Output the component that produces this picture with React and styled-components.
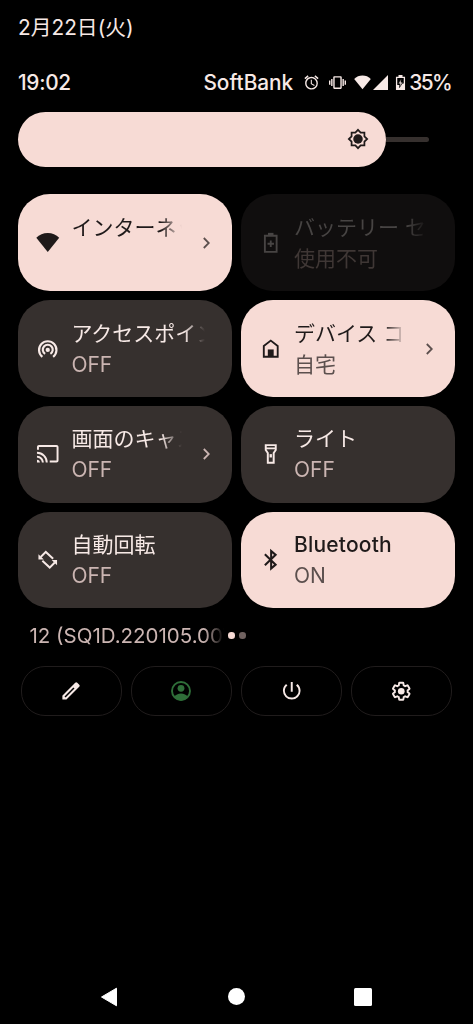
import React from 'react'
import styled, { createGlobalStyle, css } from 'styled-components'
import {
    MdAlarm,
    MdVibration,
    MdCast,
    MdPowerSettingsNew,
} from 'react-icons/md'

const WifiIcon = () => (
    <svg viewBox="0 0 24 24"><path fill="currentColor" d="M12 21.5 0.3 6.9C3.4 3.6 7.500 2 12 2s8.600 1.600 11.700 4.900z" /></svg>
)

const HotspotIcon = () => (
    <svg viewBox="0 0 24 24" fill="none" stroke="currentColor" strokeWidth="2.200">
        <path d="M6.500 20.200a8.900 8.900 0 1 1 11 0" />
        <path d="M9.300 17.300a5.100 5.100 0 1 1 5.400 0" />
        <circle cx="12" cy="13.200" r="2.200" fill="currentColor" stroke="none" />
    </svg>
)

const BatterySaverIcon = () => (
    <svg viewBox="0 0 24 24" fill="none" stroke="currentColor" strokeWidth="1.900">
        <path d="M6 4.900h12v16.400H6z" />
        <path d="M9.200 3.200h5.600" strokeWidth="2.600" />
        <path d="M12 9.700v6.600M8.700 13h6.600" />
    </svg>
)

const HomeIcon = () => (
    <svg viewBox="0 0 24 24">
        <path d="M4.900 20.200V9.200L12 3.700l7.100 5.500v11z" fill="none" stroke="currentColor" strokeWidth="1.900" />
        <path d="M9 12.700h6v7H9z" fill="currentColor" />
    </svg>
)

const FlashlightIcon = () => (
    <svg viewBox="0 0 24 24" fill="none" stroke="currentColor" strokeWidth="2">
        <path d="M6.900 3.200h10.200v5L15 11.200v9.900H9v-9.900L6.900 8.200zM6.900 6.500h10.200" />
        <path d="M12 12.400v3.400" strokeWidth="2.400" />
    </svg>
)

const RotateIcon = () => (
    <svg viewBox="0 0 24 24" fill="none" stroke="currentColor" strokeWidth="2">
        <path d="M4.800 9.200 10 4l7.500 7M19.200 14.800 14 20l-7.500-7" />
        <path d="M2.500 6.300v5.500H8zM21.500 17.700v-5.500H16z" fill="currentColor" stroke="none" />
    </svg>
)

const BluetoothIcon = () => (
    <svg viewBox="0 0 24 24" fill="none" stroke="currentColor" strokeWidth="2.100">
        <path d="M6 6.300 17 17l-4.600 4V3L17 7 6 17.700" />
    </svg>
)

const BrightnessIcon = () => (
    <svg viewBox="0 0 24 24">
        <path d="M12 2l2.900 3H19v4.100l3 2.900-3 2.900V19h-4.100L12 22l-2.900-3H5v-4.100L2 12l3-2.900V5h4.100z" fill="none" stroke="currentColor" strokeWidth="1.900" />
        <circle cx="12" cy="12" r="5.200" fill="currentColor" />
    </svg>
)

const PencilIcon = () => (
    <svg viewBox="0 0 24 24">
        <path d="M2.600 17.300v3.600c0 .28.22.5.5.5h3.600c.13 0 .26-.05.35-.15L21 7.400a1.500 1.500 0 0 0 0-2.200L18.800 3a1.500 1.500 0 0 0-2.200 0L2.750 16.900c-.1.1-.15.22-.15.4z" fill="currentColor" />
        <path d="M5.500 18.500 15.200 8.800" stroke="#000" strokeWidth="1.700" />
    </svg>
)

const UserIcon = () => (
    <svg viewBox="0 0 24 24">
        <circle cx="12" cy="12" r="9" fill="none" stroke="currentColor" strokeWidth="1.900" />
        <circle cx="12" cy="9.300" r="3.400" fill="currentColor" />
        <path d="M5 18.200c1.500-2.300 4.200-3.600 7-3.600s5.500 1.300 7 3.600c-1.700 2-4.200 3.200-7 3.200s-5.300-1.200-7-3.200z" fill="currentColor" />
    </svg>
)

const GearIcon = () => (
    <svg viewBox="0 0 24 24">
        <path
            d="M19.430 12.980c.04-.32.07-.64.07-.98 0-.34-.03-.66-.07-.98l2.110-1.650c.19-.15.24-.42.12-.64l-2-3.460c-.09-.16-.26-.25-.44-.25-.06 0-.12.01-.17.03l-2.490 1c-.52-.4-1.080-.73-1.690-.98l-.38-2.650C14.460 2.180 14.250 2 14 2h-4c-.25 0-.46.18-.49.42l-.38 2.650c-.61.25-1.170.59-1.690.98l-2.490-1c-.06-.02-.12-.03-.18-.03-.17 0-.34.09-.43.25l-2 3.460c-.13.22-.07.49.12.64l2.110 1.650c-.04.32-.07.65-.07.98 0 .33.03.66.07.98l-2.110 1.650c-.19.15-.24.42-.12.64l2 3.460c.09.16.26.25.44.25.06 0 .12-.01.17-.03l2.490-1c.52.4 1.080.73 1.690.98l.38 2.650c.03.24.24.42.49.42h4c.25 0 .46-.18.49-.42l.38-2.650c.61-.25 1.170-.59 1.690-.98l2.490 1c.06.02.12.03.18.03.17 0 .34-.09.43-.25l2-3.460c.12-.22.07-.49-.12-.64l-2.110-1.650z"
            fill="none" stroke="currentColor" strokeWidth="2.200"
        />
        <circle cx="12" cy="12" r="3.900" fill="currentColor" />
    </svg>
)

const ChevronIcon = () => (
    <svg viewBox="0 0 7 12" width="7" height="12" fill="none" stroke="currentColor" strokeWidth="1.800">
        <path d="M.8 1 5.800 6 .8 11" />
    </svg>
)

const tiles = [
    { title: 'インターネット', icon: <WifiIcon />, state: 'on', arrow: true },
    { title: 'バッテリー セーバー', sub: '使用不可', icon: <BatterySaverIcon />, state: 'disabled' },
    { title: 'アクセスポイント', sub: 'OFF', icon: <HotspotIcon />, state: 'off' },
    { title: 'デバイス コントロール', sub: '自宅', icon: <HomeIcon />, state: 'on', arrow: true },
    { title: '画面のキャスト', sub: 'OFF', icon: <MdCast />, state: 'off', arrow: true },
    { title: 'ライト', sub: 'OFF', icon: <FlashlightIcon />, state: 'off' },
    { title: '自動回転', sub: 'OFF', icon: <RotateIcon />, state: 'off' },
    { title: 'Bluetooth', sub: 'ON', icon: <BluetoothIcon />, state: 'on', latin: true },
]

const Tile = ({ title, sub, icon, state, arrow, latin }) => (
    <TileBox $state={state} $arrow={arrow}>
        <TileIcon>{icon}</TileIcon>
        <TileText>
            <Title $latin={latin}>{title}</Title>
            <Sub>{sub}</Sub>
        </TileText>
        {arrow && <Arrow><ChevronIcon /></Arrow>}
    </TileBox>
)

const App = () => (
    <>
        <GlobalStyle />
        <Screen>
            <DateRow>2月22日(火)</DateRow>
            <StatusRow>
                <Clock>19:02</Clock>
                <Carrier>SoftBank</Carrier>
                <StatusIcon $size={17} $gap={9.5}><MdAlarm /></StatusIcon>
                <StatusIcon $size={17} $gap={9}><MdVibration /></StatusIcon>
                <StatusIcon $size={17} $gap={8.5}><WifiIcon /></StatusIcon>
                <StatusIcon $size={15} $gap={2}>
                    <svg viewBox="0 0 15 15"><path d="M0 15 15 0v15z" fill="currentColor" /></svg>
                </StatusIcon>
                <StatusIcon $size={15} $gap={4.5}>
                    <svg viewBox="0 0 15 15">
                        <path d="M3.600 14.300V2.400h7.800v11.900z" fill="none" stroke="currentColor" strokeWidth="1.300" />
                        <path d="M5.500 0h4v2h-4zM3.500 10h3l-.6 3 3.500-4.500h2v6h-7.900z" fill="currentColor" />
                        <path d="M8.300 3.800 5.300 8.800h1.900l-.7 3.800 3.200-5.300H7.900z" fill="currentColor" stroke="#000" strokeWidth=".5" />
                    </svg>
                </StatusIcon>
                <Percent>35%</Percent>
            </StatusRow>
            <Slider>
                <SliderFill><BrightnessIcon /></SliderFill>
                <SliderTrack />
            </Slider>
            <TileGrid>
                {tiles.map((tile) => <Tile key={tile.title} {...tile} />)}
            </TileGrid>
            <BuildRow>
                <BuildText>12 (SQ1D.220105.007)</BuildText>
                <Dot $active />
                <Dot />
            </BuildRow>
            <Actions>
                <Action $size={22}><PencilIcon /></Action>
                <Action $size={24} $color="#2f6f39"><UserIcon /></Action>
                <Action $size={23.5}><MdPowerSettingsNew /></Action>
                <Action $size={20.5}><GearIcon /></Action>
            </Actions>
            <NavBar>
                <svg width="18" height="20" viewBox="0 0 18 20"><path d="M1.500 10 16.500 1.200v17.600z" fill="#fff" stroke="#fff" strokeLinejoin="round" /></svg>
                <Home />
                <Recents />
            </NavBar>
        </Screen>
    </>
)

export default App

const GlobalStyle = createGlobalStyle`
body{
    margin: 0;
    background: #000;
}
*{
    box-sizing: border-box;
}
svg{
    display: block;
}
`

const Screen = styled.div`
    width: 473px;
    height: 1024px;
    background: #000;
    color: #f7e9e6;
    font-family: Inter, "Noto Sans CJK JP", sans-serif;
    font-size: 21px;
    display: flex;
    flex-direction: column;
    overflow: hidden;
`

const DateRow = styled.div`
    padding: 12.5px 18px 0;
    height: 67px;
    line-height: 30px;
    font-size: 20.8px;
    white-space: nowrap;
`

const StatusRow = styled.div`
    display: flex;
    align-items: center;
    height: 31px;
    padding: 0 21px 0 18px;
    font-weight: 500;
    font-size: 20.8px;
    white-space: nowrap;
`

const Clock = styled.span`
    flex: 1;
    letter-spacing: -.3px;
`

const Carrier = styled.span``

const StatusIcon = styled.span`
    margin-left: ${({ $gap }) => $gap}px;
    svg{
        width: ${({ $size }) => $size}px;
        height: ${({ $size }) => $size}px;
    }
`

const Percent = styled.span`
    margin: 0 1px 0 1.5px;
    letter-spacing: -1.6px;
`

const Slider = styled.div`
    display: flex;
    align-items: center;
    height: 55px;
    margin: 13.7px 0 0 18.4px;
`

const SliderFill = styled.div`
    width: 367.3px;
    height: 55px;
    border-radius: 27.5px;
    background: #f7dbd5;
    color: #1f1a1a;
    display: flex;
    align-items: center;
    justify-content: flex-end;
    padding-right: 17px;
    svg{
        width: 22px;
        height: 22px;
    }
`

const SliderTrack = styled.div`
    width: 43.6px;
    height: 5px;
    border-radius: 0 3px 3px 0;
    background: #36302e;
`

const TileGrid = styled.div`
    display: grid;
    grid-template-columns: repeat(2, 213.6px);
    grid-auto-rows: 96.7px;
    gap: 9px;
    margin: 27.8px 0 0 18.4px;
`

const tileColors = {
    on: css`
        --title: #1f1a1a;
        --sub: #5c504e;
        background: #f7dbd5;
    `,
    off: css`
        --title: #f7e9e6;
        --sub: #cbb5b2;
        background: #36302e;
    `,
    disabled: css`
        --title: #474443;
        --sub: #3f3735;
        background: #100e0e;
    `,
}

const TileBox = styled.div`
    ${({ $state }) => tileColors[$state]}
    display: flex;
    align-items: center;
    border-radius: 32px;
    padding: 0 ${({ $arrow }) => ($arrow ? 21.5 : 26)}px 0 18px;
`

const TileIcon = styled.div`
    color: var(--title);
    margin-right: 11.5px;
    svg{
        width: 23.5px;
        height: 23.5px;
    }
`

const TileText = styled.div`
    flex: 1;
    min-width: 0;
    height: 62px;
    overflow: hidden;
    white-space: nowrap;
    line-height: 31px;
    mask-image: linear-gradient(to right, #000 calc(100% - 22px), transparent calc(100% - 1px));
`

const Title = styled.div`
    color: var(--title);
    font-weight: ${({ $latin }) => ($latin ? 500 : 400)};
    letter-spacing: ${({ $latin }) => ($latin ? '.2px' : 'normal')};
    height: 31px;
`

const Sub = styled.div`
    color: var(--sub);
    height: 31px;
`

const Arrow = styled.div`
    color: var(--sub);
    margin-left: 20.5px;
`

const BuildRow = styled.div`
    display: flex;
    align-items: center;
    height: 30px;
    margin: 12px 0 0 29.5px;
`

const BuildText = styled.div`
    width: 194px;
    overflow: hidden;
    white-space: nowrap;
    color: #cbb5b2;
    font-size: 20.5px;
    mask-image: linear-gradient(to right, #000 calc(100% - 20px), transparent);
`

const Dot = styled.div`
    width: 6.6px;
    height: 6.6px;
    border-radius: 50%;
    margin-left: 4.5px;
    background: ${({ $active }) => ($active ? '#f7dbd5' : '#706260')};
`

const Actions = styled.div`
    display: grid;
    grid-template-columns: repeat(4, 101px);
    gap: 9.2px;
    margin: 15.4px 0 0 20.5px;
`

const Action = styled.div`
    height: 50.5px;
    border: 1.2px solid #201c1c;
    border-radius: 24px;
    display: flex;
    align-items: center;
    justify-content: center;
    color: ${({ $color }) => $color || '#f7e9e6'};
    svg{
        width: ${({ $size }) => $size}px;
        height: ${({ $size }) => $size}px;
    }
`

const NavBar = styled.div`
    display: flex;
    align-items: center;
    justify-content: space-between;
    margin-top: auto;
    height: 55px;
    padding: 0 101px 0 100px;
`

const Home = styled.div`
    width: 17px;
    height: 17px;
    border-radius: 50%;
    background: #fff;
`

const Recents = styled.div`
    width: 18px;
    height: 18px;
    border-radius: 1.5px;
    background: #fff;
`
